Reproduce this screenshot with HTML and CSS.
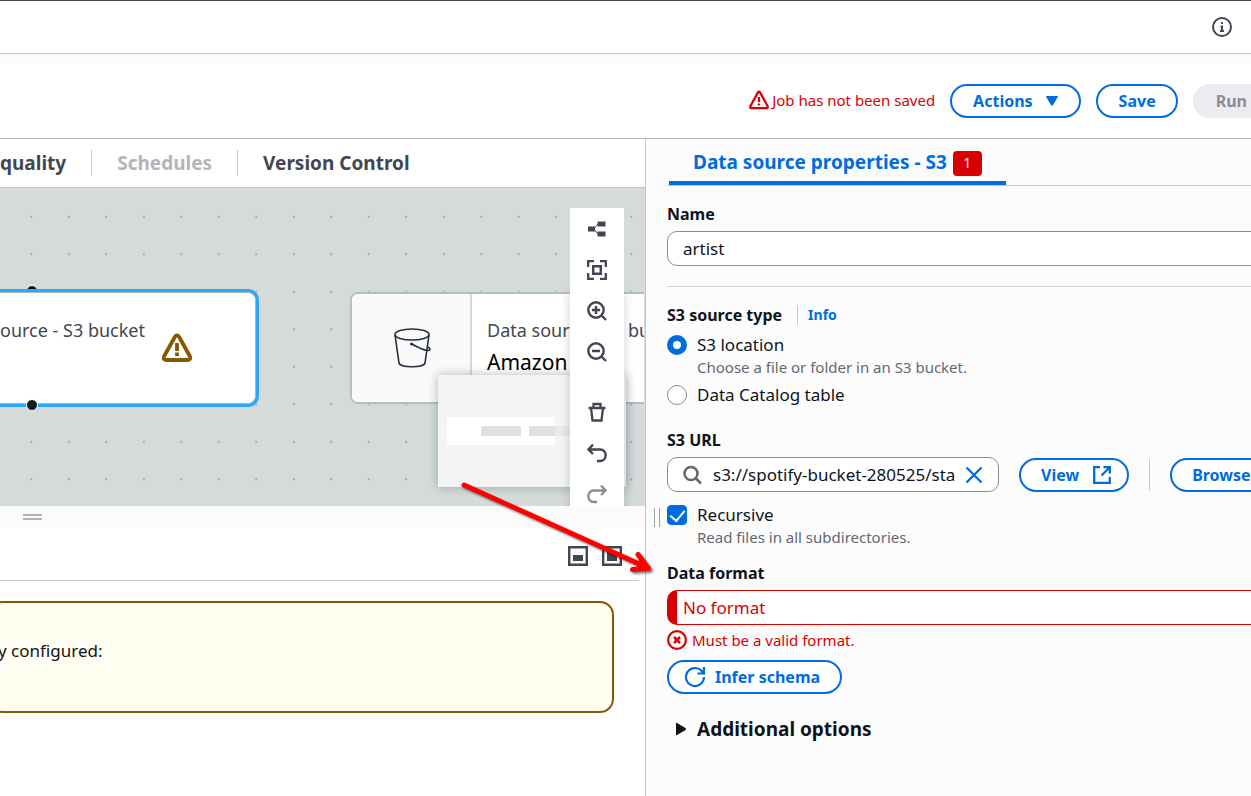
FILE: index.html
```
<!DOCTYPE html>
<html lang="en">
<head>
<meta charset="utf-8">
<title>Visual job editor</title>
<link rel="stylesheet" href="styles.css">
</head>
<body>
<div class="app">
  <div class="topbar">
    <button class="icon-btn" aria-label="Info panel">
      <svg width="20" height="20" viewBox="0 0 20 20" fill="none" stroke="#424650" stroke-width="2"><circle cx="10" cy="10" r="9"/><path d="M10 5v2M8.500 9.500H10V14M8 14h4"/></svg>
    </button>
  </div>
  <div class="strip"></div>
  <header class="header">
    <p class="unsaved">
      <svg width="20" height="20" viewBox="0 0 20 20" fill="none" stroke="#d90000" stroke-width="2.300" stroke-linejoin="round"><path d="M8.800 2.600Q10 .8 11.200 2.600L18.500 16Q19.300 18.200 17.500 18.200H2.500Q.7 18.200 1.500 16Z"/><path d="M10 7v5M10 13.500v2"/></svg>
      Job has not been saved
    </p>
    <button class="btn">Actions <svg class="caret" width="14" height="12" viewBox="0 0 14 12"><path d="M2 1h10q1.500 0 .7 1.300L8 10q-1 1.300-2 0L1.300 2.300Q.5 1 2 1z" fill="#006ce0"/></svg></button>
    <button class="btn">Save</button>
    <button class="btn btn-disabled" disabled>Run</button>
  </header>

  <main class="main">
    <section class="left">
      <nav class="tabs">
        <a class="tab" href="#quality">quality</a>
        <a class="tab tab-off" href="#schedules" aria-disabled="true">Schedules</a>
        <a class="tab" href="#version">Version Control</a>
      </nav>

      <div class="canvas">
        <svg class="dots" width="100%" height="100%"><defs><pattern id="grid" x="12.500" y="10" width="37.500" height="37.500" patternUnits="userSpaceOnUse"><circle cx="18.800" cy="18.800" r="1.100" fill="#9aa3a5"/></pattern></defs><rect width="100%" height="100%" fill="url(#grid)"/></svg>

        <span class="port port-top"></span>
        <div class="node node-active">
          <span class="node-kind">ource - S3 bucket</span>
          <svg class="node-warn" width="32" height="30" viewBox="0 0 32 30" fill="none" stroke="#855900" stroke-width="3.800" stroke-linejoin="round"><path d="M13.800 4Q16 .8 18.200 4L29 23.500Q30.200 27 27 27H5Q1.800 27 3 23.500Z"/><path d="M16 10v8M16 19.500v3.500"/></svg>
        </div>
        <span class="port port-bottom"></span>

        <div class="node node-source">
          <div class="node-icon">
            <svg width="40" height="42" viewBox="0 0 40 42" fill="none" stroke="#232f3e" stroke-width="1.600"><ellipse cx="19" cy="7.500" rx="17" ry="5.500"/><path d="M2 8l4 28c1 5 25 5 26 0l4-28M19 17c5 3 12 6 16 6.500q3 0 1.500-2.500L34.500 20"/><circle cx="18.500" cy="17" r="1.500" fill="#232f3e" stroke="none"/></svg>
          </div>
          <div class="node-text">
            <span class="node-kind">Data source - S3 bucket</span>
            <span class="node-name">Amazon S3</span>
          </div>
        </div>

        <div class="minimap">
          <div class="mini-view"></div>
          <svg class="mini-nodes" width="188" height="112"><rect x="43" y="51" width="40" height="10" rx="1" fill="#e0e0e0"/><path d="M91 51h26v10H91z" fill="#e0e0e0"/><path d="M117 51h20v10h-20z" fill="#e9e9e9"/></svg>
        </div>

        <div class="toolbar">
          <button class="tool" aria-label="Auto layout"><svg width="20" height="20" viewBox="0 0 20 20"><path d="M1 7.500h7v5H1zM10.500 2.500h8v5h-8zM10.500 12.500h8v5h-8z" fill="#424650"/><path d="M11 5L7.500 9v2l3.500 4" fill="none" stroke="#424650" stroke-width="1"/></svg></button>
          <button class="tool" aria-label="Fit view"><svg width="20" height="20" viewBox="0 0 20 20" fill="none" stroke="#424650" stroke-width="2.300"><path d="M7 1.200H1.200v5.800M13 1.200h5.800v5.800M18.800 13v5.800h-5.800M7 18.800H1.200v-5.800"/><path d="M6.200 6.200h7.600v7.600H6.200z" stroke-width="2.500"/></svg></button>
          <button class="tool" aria-label="Zoom in"><svg width="20" height="20" viewBox="0 0 20 20" fill="none" stroke="#424650" stroke-width="2.400"><circle cx="9" cy="9" r="7.700"/><path d="M14.500 14.500l4.500 4.500M5 9h8M9 5v8"/></svg></button>
          <button class="tool" aria-label="Zoom out"><svg width="20" height="20" viewBox="0 0 20 20" fill="none" stroke="#424650" stroke-width="2.400"><circle cx="9" cy="9" r="7.700"/><path d="M14.500 14.500l4.500 4.500M5 9h8"/></svg></button>
          <button class="tool tool-gap" aria-label="Remove"><svg width="20" height="20" viewBox="0 0 20 20" fill="none" stroke="#424650" stroke-width="2"><path d="M1.500 6h17M6.500 6V2h7v4M4 6l1.500 12.500h9L16 6" stroke-width="2.300"/></svg></button>
          <button class="tool" aria-label="Undo"><svg width="20" height="20" viewBox="0 0 20 20" fill="none" stroke="#424650" stroke-width="2.400"><path d="M6 1.500L1.500 6.500 6 11M1.500 6.500h11.500c7.500 0 7.500 11.500 0 11.500h-3"/></svg></button>
          <button class="tool" aria-label="Redo" disabled><svg width="20" height="20" viewBox="0 0 20 20" fill="none" stroke="#8c8c94" stroke-width="2.400"><path d="M14 1.500L18.500 6.500 14 11M18.500 6.500H7c-7.500 0-7.500 11.500 0 11.500h3"/></svg></button>
        </div>
      </div>

      <div class="splitter"><span class="grip grip-h"></span></div>

      <section class="output">
        <div class="output-bar">
          <button class="icon-btn" aria-label="Half height"><svg width="20" height="20" viewBox="0 0 20 20"><path d="M1.200 1.200h17.600v17.600H1.200z" fill="#fff" stroke="#424650" stroke-width="2.400"/><path d="M5 9h10v6H5z" fill="#424650"/></svg></button>
          <button class="icon-btn" aria-label="Full height"><svg width="20" height="20" viewBox="0 0 20 20"><path d="M1.200 1.200h17.600v17.600H1.200z" fill="#fff" stroke="#424650" stroke-width="2.400"/><path d="M5 5h10v10H5z" fill="#424650"/></svg></button>
        </div>
        <div class="notice">y configured:</div>
      </section>
    </section>

    <section class="right">
      <div class="gutter"><span class="grip grip-v"></span></div>
      <form class="props">
        <div class="props-tabs"><a class="props-tab" href="#props">Data source properties - S3 <span class="badge">1</span></a></div>

        <label class="label first" for="name">Name</label>
        <input class="field" id="name" type="text" value="artist">
        <hr class="rule">

        <div class="label-row"><span class="label" id="srctype">S3 source type</span><a class="info" href="#info">Info</a></div>
        <div class="choice"><input class="radio" type="radio" name="src" id="loc" checked><label for="loc">S3 location</label></div>
        <p class="hint">Choose a file or folder in an S3 bucket.</p>
        <div class="choice"><input class="radio" type="radio" name="src" id="cat"><label for="cat">Data Catalog table</label></div>

        <label class="label url-label" for="url">S3 URL</label>
        <div class="url-row">
          <div class="search">
            <svg width="20" height="20" viewBox="0 0 20 20" fill="none" stroke="#656871" stroke-width="2.500"><circle cx="8" cy="8.500" r="6.500"/><path d="M12.500 13l5.500 5.500"/></svg>
            <input class="search-input" id="url" type="text" value="s3://spotify-bucket-280525/staging">
            <button class="icon-btn" type="button" aria-label="Clear"><svg width="18" height="18" viewBox="0 0 18 18" fill="none" stroke="#006ce0" stroke-width="2.300"><path d="M1.500 1.500l15 15M16.500 1.500l-15 15"/></svg></button>
          </div>
          <button class="btn view" type="button">View <svg width="18" height="18" viewBox="0 0 18 18" fill="none" stroke="#006ce0" stroke-width="2.300"><path d="M7 1.200H1.200v15.600h15.600V11M10.500 1.200h6.300V7.500M16.800 1.200L8.500 9.500"/></svg></button>
          <span class="divider"></span>
          <button class="btn browse" type="button">Browse S3</button>
        </div>

        <div class="choice check-row"><input class="check" type="checkbox" id="rec" checked><label for="rec">Recursive</label></div>
        <p class="hint">Read files in all subdirectories.</p>

        <label class="label format-label" for="format">Data format</label>
        <select class="field invalid" id="format"><option>No format</option></select>
        <p class="error">
          <svg width="20" height="20" viewBox="0 0 20 20" fill="none" stroke="#d90000" stroke-width="2.200"><circle cx="10" cy="10" r="8.900"/><path d="M7 7l6 6M13 7l-6 6" stroke-width="2.500"/></svg>
          Must be a valid format.
        </p>
        <button class="btn infer" type="button"><svg width="22" height="22" viewBox="0 0 22 22" fill="none" stroke="#006ce0" stroke-width="2.200"><path d="M20 11a9 9 0 1 1-2.500-6.200L19.500 7M20 1v6.500h-6.500"/></svg>Infer schema</button>
        <button class="expander" type="button" aria-expanded="false"><svg width="12" height="14" viewBox="0 0 12 14"><path d="M1 1.500Q1 .3 2 1l8.500 5q1 1 0 2L2 13q-1 .7-1-.5z" fill="#0f141a"/></svg>Additional options</button>
      </form>
    </section>
  </main>

  <svg class="arrow" width="210" height="110" viewBox="0 0 210 110" fill="none" stroke="#f00" stroke-width="5" stroke-linecap="round" stroke-linejoin="round"><path d="M14 15L196 97M188 84.500L198.500 98.500 182.500 99.500"/><path d="M190 89L198 98 187 98Z" fill="#f00" stroke-width="1"/></svg>
</div>
</body>
</html>
```
FILE: styles.css
```
* { box-sizing: border-box; }
body { margin: 0; font: 17px/24px "Noto Sans", "Open Sans", sans-serif; color: #0f141a; }
button, input, select { font: inherit; color: inherit; }
button { margin: 0; cursor: pointer; }
p { margin: 0; }
a { text-decoration: none; }
svg { display: block; flex: none; }

.app { position: relative; display: flex; flex-direction: column; height: 100vh; overflow: hidden; background: #fff; }
.topbar { display: flex; flex: none; align-items: center; justify-content: flex-end; height: 54px; padding-right: 19px; border-top: 1px solid #424650; border-bottom: 1px solid #c6c6cd; }
.icon-btn { display: flex; padding: 0; border: 0; background: none; }
.strip { flex: none; height: 10px; background: #fbfbfb; }
.header { display: flex; flex: none; align-items: center; justify-content: flex-end; gap: 15px; height: 75px; margin-right: -18px; border-bottom: 1px solid #aab7b8; }
.unsaved { display: flex; align-items: center; gap: 3px; padding-bottom: 2px; color: #d90000; font-size: 15px; }

.btn { display: flex; flex: none; align-items: center; justify-content: center; height: 34px; padding: 0 21px; border: 2px solid #006ce0; border-radius: 17px; background: #fff; color: #006ce0; font-size: 16px; font-weight: 700; white-space: nowrap; }
.header .btn { padding: 0 20px 0 21px; }
.caret { margin: 0 0 0 12px; }
.btn-disabled { border-color: #ebebf0; background: #ebebf0; color: #8c8c94; }

.main { display: grid; flex: 1; grid-template-columns: minmax(0, 645fr) minmax(0, 606fr); min-height: 0; }
.left { display: flex; flex-direction: column; min-width: 0; }
.tabs { display: flex; flex: none; align-items: center; height: 49px; border-bottom: 1px solid #c6c6cd; }
.tab { padding: 0 25px; border-left: 1px solid #c6c6cd; color: #424650; font-size: 19px; font-weight: 700; line-height: 26px; white-space: nowrap; }
.tab:first-child { padding-left: 0; border-left: 0; }
.tab-off { color: #b4b4bb; }

.canvas { position: relative; flex: 0 0 40vh; overflow: hidden; background: #d5dbdb; }
.dots { position: absolute; inset: 0; }
.port { position: absolute; left: 26px; width: 12px; height: 12px; border: 1px solid #fff; border-radius: 50%; background: #16191f; }
.port-top { top: 97px; }
.port-bottom { top: 211px; }
.node { position: absolute; display: flex; background: #fff; }
.node-active { top: 104px; left: -100px; width: 356px; height: 112px; padding-left: 99px; border: 1px solid #aab7b8; border-radius: 8px; box-shadow: 0 0 0 3px #2ea7fb; }
.node-active .node-kind { padding-top: 24px; }
.node-kind { color: #424650; font-size: 18px; line-height: 26px; white-space: nowrap; }
.node-name { color: #000; font-size: 21px; line-height: 30px; white-space: nowrap; }
.node-warn { margin: 40px 0 0 16px; }
.node-source { top: 104px; left: 350px; width: 294px; height: 112px; overflow: hidden; border: 2px solid #b4bfc0; border-right: 0; border-radius: 8px 0 0 8px; }
.node-icon { display: flex; flex: none; align-items: center; justify-content: center; width: 120px; padding-left: 3px; border-right: 2px solid #d5dbdb; background: #fafafa; }
.node-text { display: flex; flex-direction: column; gap: 4px; padding: 23px 0 0 15px; }
.minimap { position: absolute; top: 187px; right: 19px; width: 188px; height: 112px; background: #f4f4f4; box-shadow: 0 0 10px rgba(0, 28, 36, .3); }
.mini-view { width: 108px; height: 28px; margin: 42px 0 0 9px; background: #fff; }
.mini-nodes { position: absolute; inset: 0; }
.toolbar { position: absolute; top: 20px; right: 21px; display: flex; flex-direction: column; width: 54px; background: #fff; box-shadow: 0 84px 10px rgba(0, 28, 36, .2); }
.tool { display: flex; align-items: center; justify-content: center; width: 54px; height: 41px; padding: 0; border: 0; background: none; }
.tool-gap { margin-top: 19px; }

.splitter { flex: none; height: 22px; padding: 8px 0 0 23px; background: #fbfbfb; }
.grip { display: block; border: solid #95a5a6; }
.grip-h { width: 19px; height: 6px; border-width: 2px 0; border-color: #a9b5b6; }
.output { flex: 1; min-height: 0; }
.output-bar { display: flex; align-items: center; justify-content: flex-end; gap: 14px; height: 53px; margin-right: 6px; padding: 3px 17px 0 0; border-bottom: 1px solid #c6c6cd; }
.notice { height: 112px; margin: 20px 31px 0 -12px; padding: 36px 0 0 8px; border: 2px solid #855900; border-radius: 14px; background: #fffef0; }

.right { display: flex; min-width: 0; overflow: hidden; border-left: 1px solid #c6c6cd; background: #fcfcfd; }
.gutter { flex: none; width: 21px; padding: 369px 0 0 8px; }
.grip-v { width: 6px; height: 19px; border-width: 0 1px; }
.props { flex: 1; min-width: 0; margin-right: -20px; }
.props-tabs { display: flex; height: 47px; padding-left: 2px; border-bottom: 1px solid #c6c6cd; }
.props-tab { display: flex; align-items: center; gap: 6px; padding: 3px 24px 0; border-bottom: 4px solid #006ce0; border-radius: 2px 2px 0 0; color: #006ce0; font-size: 19px; font-weight: 700; white-space: nowrap; }
.badge { width: 29px; height: 25px; margin-top: 4px; border-radius: 4px; background: #d90000; color: #fff; font-size: 14px; font-weight: 400; line-height: 24px; text-align: center; }
.label { display: block; font-size: 16px; font-weight: 700; }
.first { margin-top: 16px; }
.field { display: block; width: 100%; height: 35px; margin-top: 5px; padding: 0 15px; border: 1px solid #8c8c94; border-radius: 10px; background: #fff; }
.rule { margin: 20px 0 0; border: 0; border-top: 1px solid #d5d5da; }
.label-row { display: flex; align-items: center; gap: 15px; margin-top: 16px; }
.info { padding-left: 10px; border-left: 1px solid #c6c6cd; color: #006ce0; font-size: 14px; font-weight: 700; line-height: 20px; }
.choice { display: flex; align-items: center; gap: 10px; margin-top: 6px; }
.radio { flex: none; width: 20px; height: 20px; margin: 0; appearance: none; border: 1px solid #8c8c94; border-radius: 50%; background: #fff; }
.radio:checked { border: 6px solid #006ce0; }
.hint { margin-left: 30px; color: #656871; font-size: 15px; line-height: 20px; }
.url-label { margin-top: 21px; }
.url-row { display: flex; align-items: center; margin-top: 5px; }
.search { display: flex; flex: none; align-items: center; gap: 10px; width: 332px; height: 35px; padding: 0 15px; border: 1px solid #8c8c94; border-radius: 10px; background: #fff; }
.search-input { flex: 1; min-width: 0; padding: 0; border: 0; background: none; outline: 0; }
.view { gap: 14px; margin-left: 20px; padding: 0 16px 0 20px; }
.divider { flex: none; width: 1px; height: 32px; margin: 0 20px; background: #c6c6cd; }
.browse { padding: 0 20px; }
.check-row { margin-top: 11px; }
.check { display: flex; flex: none; justify-content: center; width: 20px; height: 20px; margin: 0; appearance: none; border-radius: 4px; background: #fff; border: 1px solid #8c8c94; }
.check:checked { border-color: #006ce0; background: #006ce0; }
.check:checked::before { content: ""; width: 7px; height: 12px; margin-top: 1px; border: solid #fff; border-width: 0 2px 2px 0; transform: rotate(40deg); }
.format-label { margin-top: 14px; }
.invalid { appearance: none; padding: 0 6px; border-color: #d90000; border-left-width: 10px; color: #d90000; }
.error { display: flex; align-items: center; gap: 5px; margin-top: 5px; color: #d90000; font-size: 15px; line-height: 20px; }
.infer { gap: 9px; margin-top: 10px; padding: 0 20px 0 15px; }
.expander { display: flex; align-items: center; gap: 10px; margin-top: 23px; padding: 0 0 0 8px; border: 0; background: none; font-size: 19px; font-weight: 700; line-height: 24px; }

.arrow { position: absolute; top: 470px; left: 450px; pointer-events: none; filter: drop-shadow(2px 2px 1px rgba(0, 0, 0, .5)); }
```
